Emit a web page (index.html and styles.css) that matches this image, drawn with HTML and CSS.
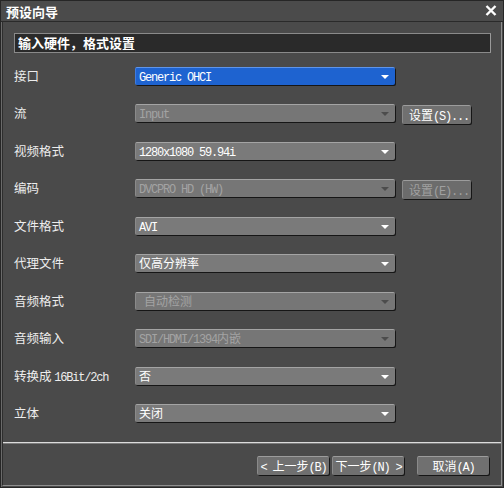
FILE: index.html
```html
<!DOCTYPE html>
<html lang="zh">
<head>
<meta charset="utf-8">
<link rel="stylesheet" href="styles.css">
</head>
<body>
<div class="window">
  <div class="titlebar">
    <span class="title">预设向导</span>
    <svg class="close" width="12" height="11" viewBox="0 0 12 11"><path d="M1.5 1 L10.5 10 M10.5 1 L1.5 10" stroke="#fff" stroke-width="2.4"/></svg>
  </div>
  <div class="panel">
    <div class="heading">输入硬件，格式设置</div>
    <div class="form">
      <div class="label">接口</div>
      <div class="select blue"><span class="mono">Generic OHCI</span><i class="arrow"></i></div>
      <div></div>

      <div class="label">流</div>
      <div class="select disabled"><span class="mono">Input</span><i class="arrow"></i></div>
      <div class="btn small">设置<span class="mono">(S)...</span></div>

      <div class="label">视频格式</div>
      <div class="select"><span class="mono">1280x1080 59.94i</span><i class="arrow"></i></div>
      <div></div>

      <div class="label">编码</div>
      <div class="select disabled"><span class="mono">DVCPRO HD (HW)</span><i class="arrow"></i></div>
      <div class="btn small disabled">设置<span class="mono">(E)...</span></div>

      <div class="label">文件格式</div>
      <div class="select"><span class="mono">AVI</span><i class="arrow"></i></div>
      <div></div>

      <div class="label">代理文件</div>
      <div class="select"><span>仅高分辨率</span><i class="arrow"></i></div>
      <div></div>

      <div class="label">音频格式</div>
      <div class="select disabled"><span class="indent">自动检测</span><i class="arrow"></i></div>
      <div></div>

      <div class="label">音频输入</div>
      <div class="select disabled"><span><span class="mono">SDI/HDMI/1394</span>内嵌</span><i class="arrow"></i></div>
      <div></div>

      <div class="label">转换成 <span class="mono">16Bit/2ch</span></div>
      <div class="select"><span>否</span><i class="arrow"></i></div>
      <div></div>

      <div class="label">立体</div>
      <div class="select"><span>关闭</span><i class="arrow"></i></div>
      <div></div>
    </div>
    <div class="separator"></div>
    <div class="footer">
      <div class="btn"><span class="mono">&lt; </span>上一步<span class="mono">(B)</span></div>
      <div class="btn">下一步<span class="mono">(N) &gt;</span></div>
      <div class="btn cancel">取消<span class="mono">(A)</span></div>
    </div>
  </div>
</div>
</body>
</html>
```
FILE: styles.css
```css
* { box-sizing: border-box; }
html, body { margin: 0; padding: 0; background: #4a4a4a; }
body {
  width: 504px;
  height: 488px;
  font-family: "Noto Sans CJK SC", "Liberation Sans", sans-serif;
  font-size: 12px;
  color: #ececec;
}
.window {
  width: 504px;
  height: 488px;
  background: #4a4a4a;
  border: 1px solid #262626;
  box-shadow: inset 1px 1px 0 #6a6a6a;
  display: flex;
  flex-direction: column;
}
.titlebar {
  height: 21px;
  flex: none;
  display: flex;
  align-items: center;
  justify-content: space-between;
  padding: 0 6px 0 5px;
  border-bottom: 1px solid #2a2a2a;
  background: #4b4b4b;
}
.title {
  font-weight: bold;
  font-size: 13px;
  color: #fff;
  line-height: 1;
}
.close { display: block; margin-top: -1px; }
.panel {
  flex: 1;
  display: flex;
  flex-direction: column;
  margin: 0 1px 1px 1px;
  border-left: 1px solid #2e2e2e;
  border-right: 1px solid #8e8e8e;
  border-bottom: 1px solid #8e8e8e;
  padding: 11px 0 0 0;
}
.heading {
  margin: 0 10px 0 11px;
  height: 20px;
  background: #2a2a2a;
  border: 1px solid #8a8a8a;
  border-right-color: #9a9a9a;
  font-weight: bold;
  font-size: 13px;
  color: #fff;
  line-height: 17px;
  padding-left: 3px;
}
.form {
  margin-top: 14px;
  padding-left: 11px;
  display: grid;
  grid-template-columns: 114px 260px 70px;
  grid-auto-rows: 37.45px;
  column-gap: 7px;
  align-items: start;
}
.label {
  height: 18px;
  line-height: 18px;
  font-size: 12.5px;
  color: #ededed;
  white-space: nowrap;
}
.mono {
  font-family: "Liberation Mono", monospace;
  font-size: 12px;
  letter-spacing: -1.2px;
}
.select {
  position: relative;
  height: 18px;
  border-radius: 2px;
  background: #7a7a7a;
  border-top: 1px solid #a4a4a4;
  border-left: 1px solid #8a8a8a;
  box-shadow: 1px 1px 0 #161616;
  padding-left: 3px;
  line-height: 16px;
  font-size: 12px;
  color: #fff;
  white-space: nowrap;
}
.select.blue {
  background: #1e63d0;
  border-top-color: #5f95ea;
  border-left-color: #3f7ce0;
}
.select.disabled { color: #a3a3a3; background: #767676; }
.indent { padding-left: 5px; }
.arrow {
  position: absolute;
  right: 6px;
  top: 7px;
  width: 0;
  height: 0;
  border-left: 4px solid transparent;
  border-right: 4px solid transparent;
  border-top: 4px solid #fff;
}
.select.disabled .arrow { border-top-color: #4c4c4c; }
.btn {
  height: 19px;
  border-radius: 2px;
  background: #707070;
  border-top: 1px solid #9c9c9c;
  border-left: 1px solid #8a8a8a;
  box-shadow: 1px 1px 0 #161616;
  color: #fff;
  font-size: 12px;
  line-height: 17px;
  text-align: center;
  white-space: nowrap;
}
.btn.small {
  width: 69px;
  margin-top: 1px;
  text-align: left;
  padding-left: 6px;
}
.btn.disabled { color: #a0a0a0; background: #6c6c6c; }
.separator {
  margin-top: 1px;
  height: 2px;
  border-top: 1px solid #dcdcdc;
  border-bottom: 1px solid #7c7c7c;
}
.footer {
  display: flex;
  justify-content: flex-end;
  gap: 3px;
  padding: 12px 12px 0 0;
}
.footer .btn { width: 72px; }
.footer .btn.cancel { margin-left: 10px; }
```
